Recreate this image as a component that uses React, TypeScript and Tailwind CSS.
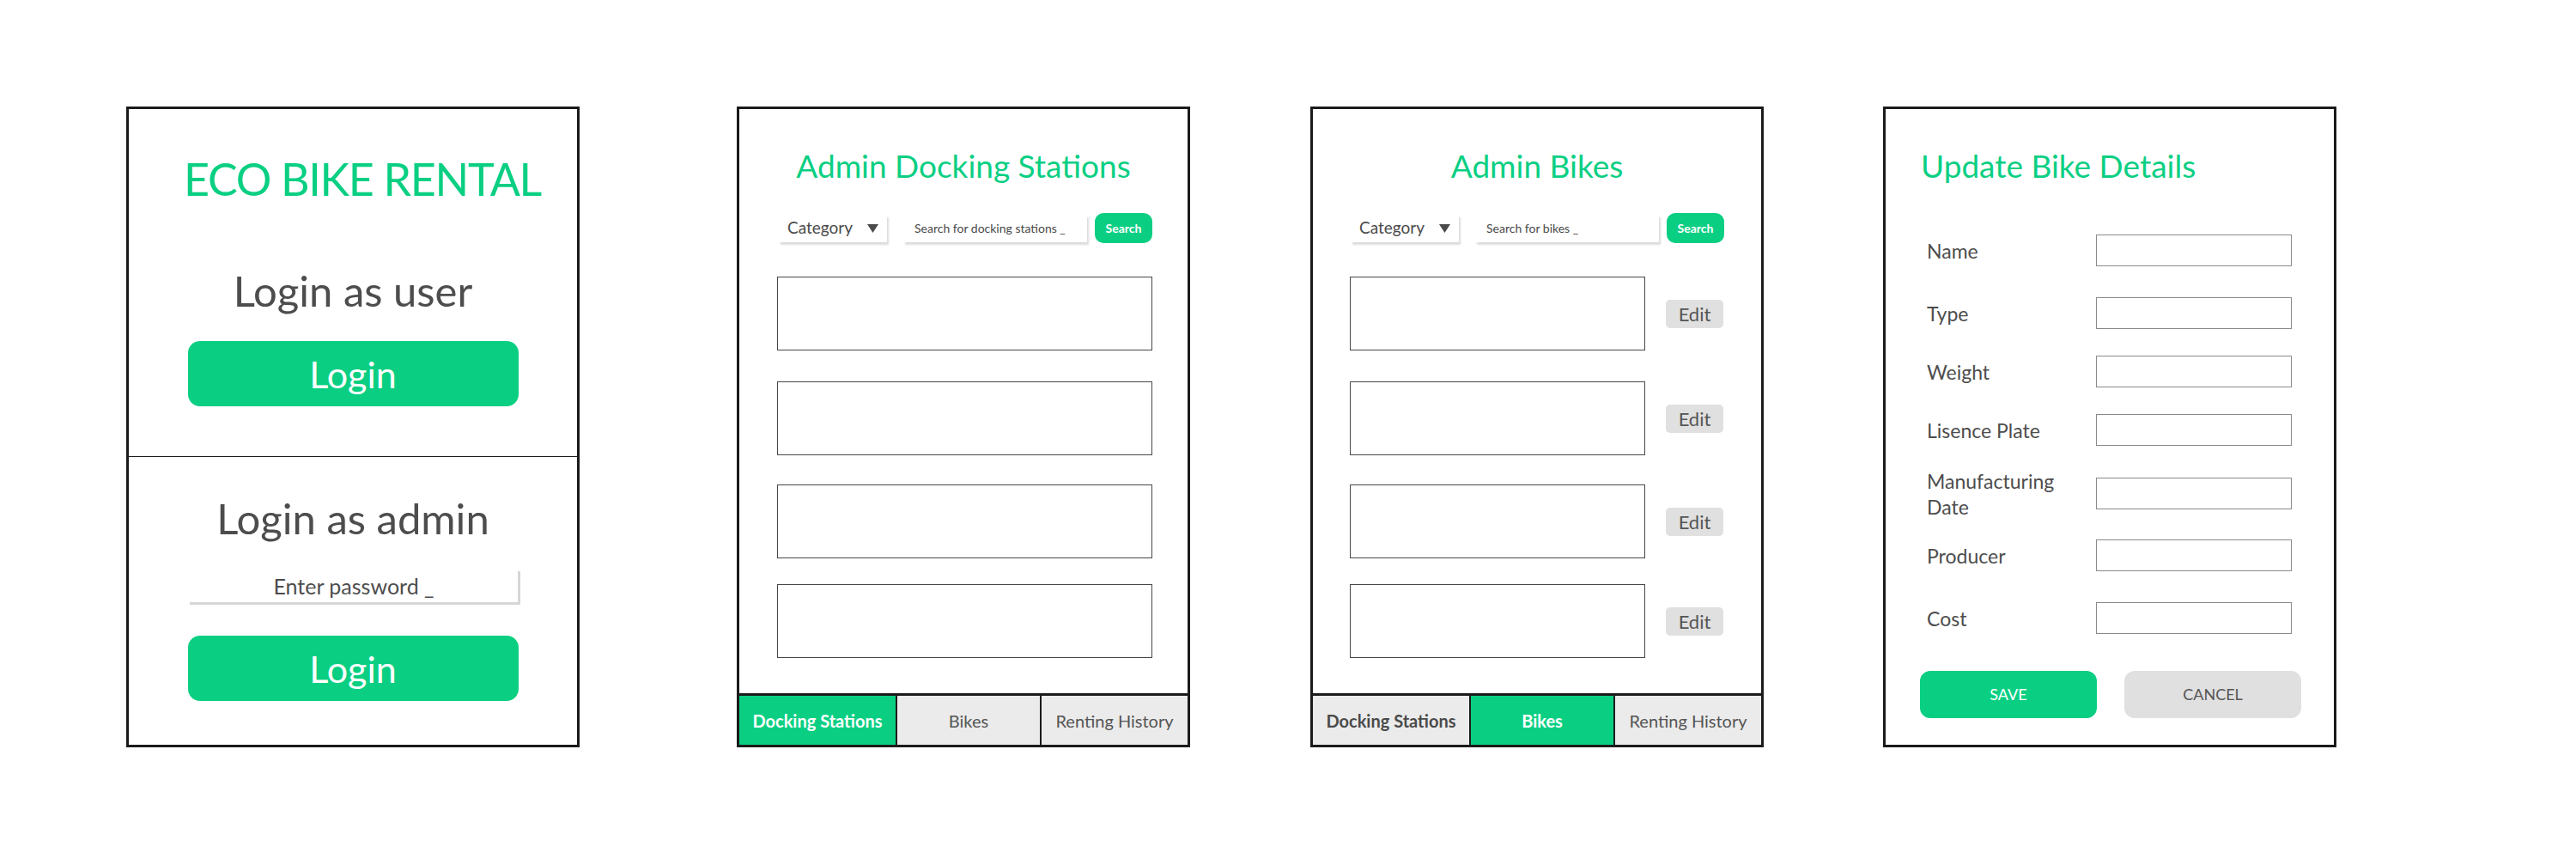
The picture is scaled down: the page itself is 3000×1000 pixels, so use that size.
import type { ReactNode } from "react";

type TabKey = "docking" | "bikes";

function Panel({ className, children }: { className?: string; children: ReactNode }) {
  return (
    <section
      className={`flex h-[746px] w-[528px] shrink-0 flex-col border-[3px] border-[#1b1b1b] bg-white ${className ?? ""}`}
    >
      {children}
    </section>
  );
}

function CategoryArrow() {
  return (
    <svg width="13" height="10" viewBox="0 0 13 10">
      <polygon points="0,0 13,0 6.5,10" fill="#4a4a4a" />
    </svg>
  );
}

function Toolbar({ placeholder, className }: { placeholder: string; className: string }) {
  return (
    <div className={`mt-[37px] flex h-[35px] items-center ${className}`}>
      <div className="flex h-[32px] w-[126px] items-center justify-between bg-white pl-[10px] pr-[10px] text-[19px] text-[#4a4a4a] shadow-[2px_3px_2px_rgba(0,0,0,0.14)]">
        <span>Category</span>
        <CategoryArrow />
      </div>
      <div className="ml-[19px] flex h-[32px] w-[214px] items-center bg-white pl-[13px] text-[14px] text-[#4a4a4a] shadow-[2px_3px_2px_rgba(0,0,0,0.14)]">
        {placeholder}
      </div>
      <button
        type="button"
        className="ml-[9px] h-[35px] w-[67px] rounded-[10px] bg-[#0acf83] text-[14px] font-bold text-white"
      >
        Search
      </button>
    </div>
  );
}

function TabBar({ active }: { active: TabKey }) {
  return (
    <div className="mt-auto flex h-[60px] border-t-[3px] border-[#1b1b1b]">
      <div
        className={`flex w-[182px] items-center justify-center text-[20px] font-bold ${
          active === "docking" ? "bg-[#0acf83] text-white" : "bg-[#ebebeb] text-[#4a4a4a]"
        }`}
      >
        Docking Stations
      </div>
      <div
        className={`flex w-[168px] items-center justify-center border-l-2 border-[#1b1b1b] text-[20px] ${
          active === "bikes" ? "bg-[#0acf83] font-bold text-white" : "bg-[#ebebeb] text-[#555555]"
        }`}
      >
        Bikes
      </div>
      <div className="flex flex-1 items-center justify-center border-l-2 border-[#1b1b1b] bg-[#ebebeb] text-[20px] text-[#555555]">
        Renting History
      </div>
    </div>
  );
}

const listGaps = ["mt-[39px]", "mt-[36px]", "mt-[34px]", "mt-[30px]"];

const fields: { label: ReactNode; gap: string }[] = [
  { label: "Name", gap: "mt-[62px]" },
  { label: "Type", gap: "mt-[36px]" },
  { label: "Weight", gap: "mt-[31px]" },
  { label: "Lisence Plate", gap: "mt-[31px]" },
  {
    label: (
      <>
        Manufacturing
        <br />
        Date
      </>
    ),
    gap: "mt-[37px]",
  },
  { label: "Producer", gap: "mt-[35px]" },
  { label: "Cost", gap: "mt-[36px]" },
];

function LoginButton({ className }: { className: string }) {
  return (
    <button
      type="button"
      className={`mx-auto flex h-[76px] w-[385px] items-center justify-center rounded-[14px] bg-[#0acf83] text-[43px] leading-none text-white ${className}`}
    >
      Login
    </button>
  );
}

export default function App() {
  return (
    <div className="flex min-h-[1000px] w-[3000px] items-start bg-white pl-[147px] pt-[124px] font-['Lato',sans-serif]">
      {/* login */}
      <Panel>
        <h1 className="mt-[55px] pl-[22px] text-center text-[52px] leading-none tracking-tight text-[#0acf83]">
          ECO BIKE RENTAL
        </h1>
        <h2 className="mt-[80px] text-center text-[49px] leading-none text-[#4d4d4d]">Login as user</h2>
        <LoginButton className="mt-[34px]" />
        <div className="mt-[58px] border-t border-[#1b1b1b]" />
        <h2 className="mt-[47px] text-center text-[49px] leading-none text-[#4d4d4d]">Login as admin</h2>
        <div className="ml-[71px] mt-[37px] flex h-[39px] w-[385px] items-center justify-center border-b-[3px] border-r-[3px] border-[#d6d6d6] text-[25px] text-[#4d4d4d]">
          Enter password _
        </div>
        <LoginButton className="mt-[36px]" />
      </Panel>

      {/* docking stations */}
      <Panel className="ml-[183px]">
        <h1 className="mt-[47px] text-center text-[37px] leading-none text-[#0acf83]">Admin Docking Stations</h1>
        <Toolbar placeholder="Search for docking stations _" className="ml-[46px]" />
        {listGaps.map((gap) => (
          <div key={gap} className={`ml-[44px] h-[86px] w-[437px] border border-[#474747] ${gap}`} />
        ))}
        <TabBar active="docking" />
      </Panel>

      {/* bikes */}
      <Panel className="ml-[140px]">
        <h1 className="mt-[47px] text-center text-[37px] leading-none text-[#0acf83]">Admin Bikes</h1>
        <Toolbar placeholder="Search for bikes _" className="ml-[44px]" />
        {listGaps.map((gap) => (
          <div key={gap} className={`ml-[43px] flex items-center ${gap}`}>
            <div className="h-[86px] w-[344px] border border-[#474747]" />
            <button
              type="button"
              className="ml-[24px] h-[33px] w-[67px] rounded-[5px] bg-[#e0e0e0] text-[22px] text-[#555555]"
            >
              Edit
            </button>
          </div>
        ))}
        <TabBar active="bikes" />
      </Panel>

      {/* update form */}
      <Panel className="ml-[139px]">
        <h1 className="ml-[41px] mt-[47px] text-[37px] leading-none text-[#0acf83]">Update Bike Details</h1>
        {fields.map((f, i) => (
          <div key={i} className={`flex h-[37px] items-center ${f.gap}`}>
            <div className="w-[245px] pl-[48px] text-[23px] leading-[30px] text-[#4d4d4d]">{f.label}</div>
            <div className="h-[37px] w-[228px] border border-[#8a8a8a]" />
          </div>
        ))}
        <div className="ml-[40px] mt-[43px] flex">
          <button
            type="button"
            className="h-[55px] w-[206px] rounded-[12px] bg-[#0acf83] text-[18px] text-white"
          >
            SAVE
          </button>
          <button
            type="button"
            className="ml-[32px] h-[55px] w-[206px] rounded-[12px] bg-[#e0e0e0] text-[18px] text-[#555555]"
          >
            CANCEL
          </button>
        </div>
      </Panel>
    </div>
  );
}
